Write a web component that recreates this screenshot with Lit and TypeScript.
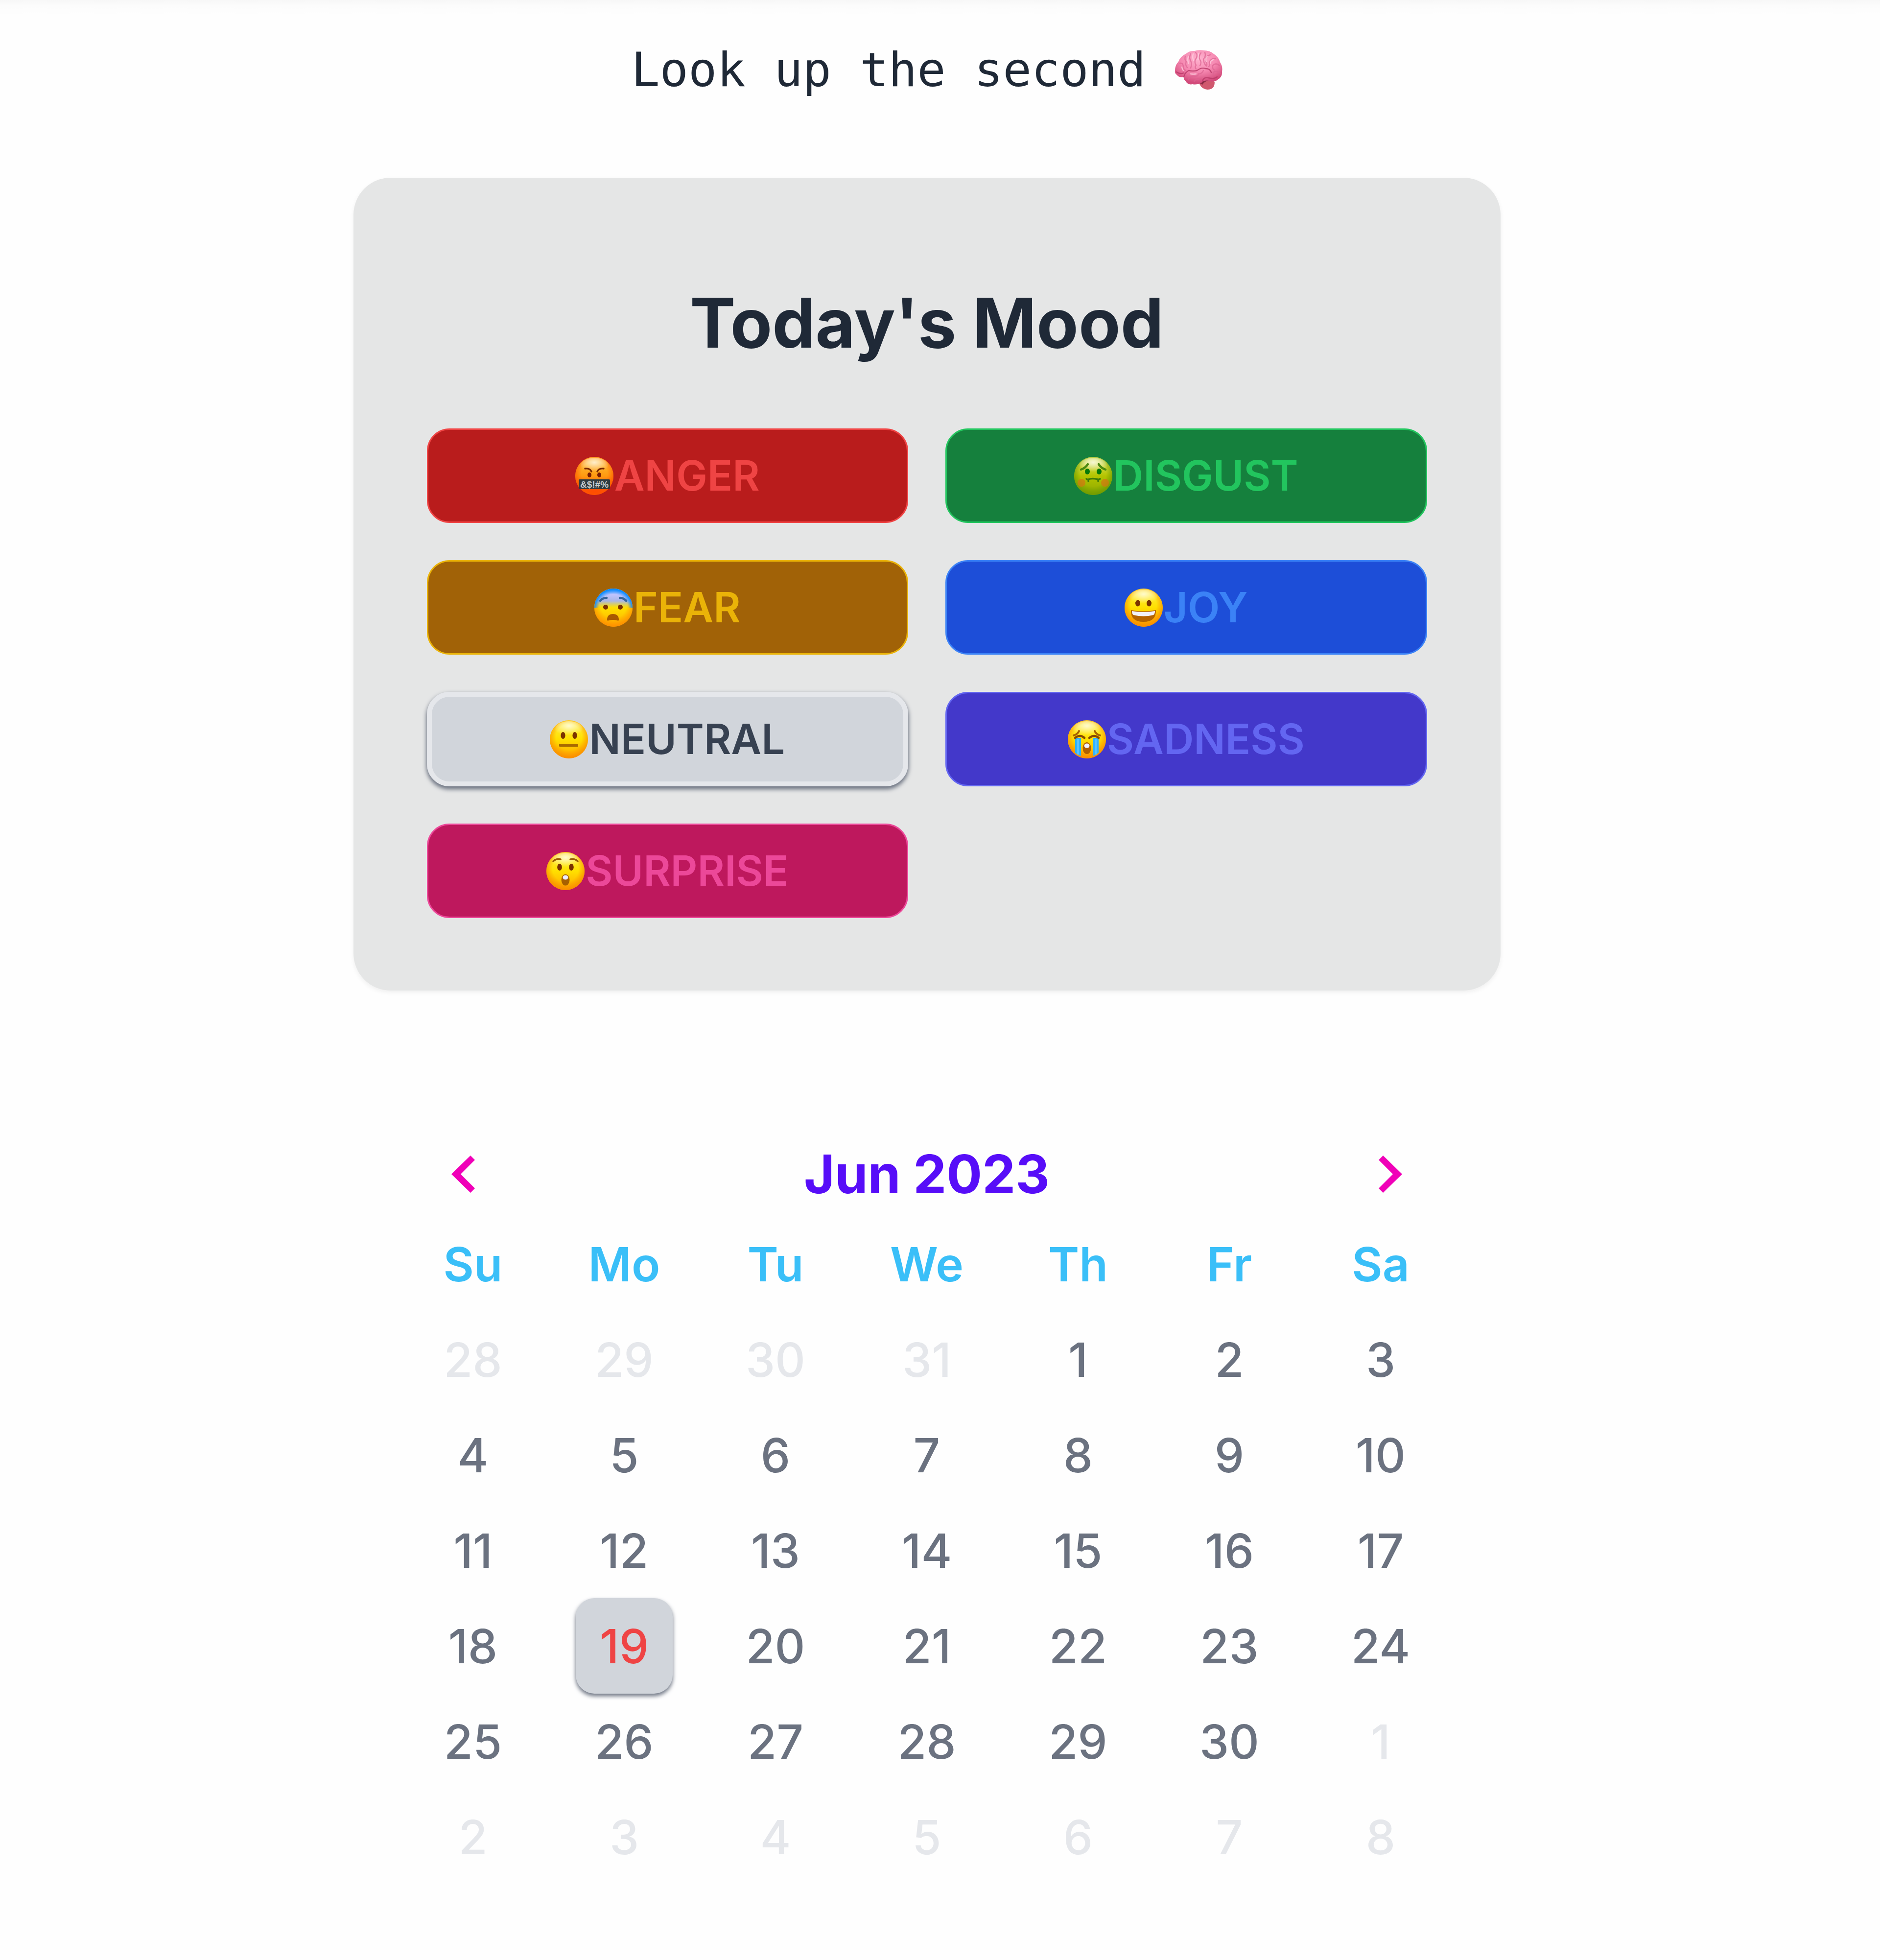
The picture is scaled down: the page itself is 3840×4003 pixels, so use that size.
import { LitElement, html, svg, css, type SVGTemplateResult } from "lit";
import { customElement, state } from "lit/decorators.js";
import { classMap } from "lit/directives/class-map.js";

interface Mood {
  id: string;
  label: string;
  top: string;
  middle: string;
  bottom: string;
  rim: string;
  features: SVGTemplateResult;
}

const eyes = (leftX: number, rightX: number, y: number, rx: number, ry: number, fill = "#7a3200") => svg`
  <ellipse cx=${leftX} cy=${y} rx=${rx} ry=${ry} fill=${fill} />
  <ellipse cx=${rightX} cy=${y} rx=${rx} ry=${ry} fill=${fill} />`;

const yellow = { top: "#fff04a", middle: "#ffe000", bottom: "#ffa600", rim: "#f98a00" };

const MOODS: Mood[] = [
  {
    id: "anger",
    label: "ANGER",
    top: "#ffc640",
    middle: "#ff9a10",
    bottom: "#ff2a00",
    rim: "#ff5a00",
    features: svg`
      <path d="M20 24q10-1 13 6M58 24q-10-1-13 6" fill="none" stroke="#7a2a00" stroke-width="3.4" stroke-linecap="round" />
      ${eyes(29, 49, 37, 4, 5, "#7a1c00")}
      <rect x="7" y="46" width="64" height="20" rx="2" fill="#2f3c40" />
      <text x="39" y="63" text-anchor="middle" font-family="Liberation Sans, sans-serif" font-size="19" font-weight="700" fill="#c5cdd0">&amp;$!#%</text>`,
  },
  {
    id: "disgust",
    label: "DISGUST",
    top: "#e3ea70",
    middle: "#b4c400",
    bottom: "#8aa800",
    rim: "#6d9a00",
    features: svg`
      <path d="M14 26q9-3 14-11M64 26q-9-3-14-11" fill="none" stroke="#4c8a10" stroke-width="4.4" stroke-linecap="round" />
      ${eyes(27, 51, 30, 5, 6, "#087a08")}
      <circle cx="15" cy="53" r="8" fill="#d07a10" opacity=".75" />
      <circle cx="63" cy="53" r="8" fill="#d07a10" opacity=".75" />
      <path d="M25 45q2 2 4 1q9-3 19 0q2 1 5-1M29 46v4M49 46v4" fill="none" stroke="#3f7a08" stroke-width="3.4" stroke-linecap="round" />`,
  },
  {
    id: "fear",
    label: "FEAR",
    top: "#8fb4ff",
    middle: "#ffdf00",
    bottom: "#ffae00",
    rim: "#ff8c00",
    features: svg`
      <path d="M0 39A39 39 0 0 1 78 39Z" fill="url(#fear-sky)" />
      <path d="M0 39A39 39 0 0 1 78 39Z" fill="url(#fear-rim)" />
      <path d="M12 25q5-6 13-6M65 25q-5-6-13-6" fill="none" stroke="#35669c" stroke-width="4.4" stroke-linecap="round" />
      ${eyes(23, 53, 38, 5, 5)}
      <path d="M26 64q0-12 12-12t12 12q0 2-2 1.500q-10-3-20 0q-2 .5-2-1.500z" fill="#a85a00" />`,
  },
  {
    id: "joy",
    label: "JOY",
    ...yellow,
    features: svg`
      ${eyes(27, 50, 30, 5, 6.5)}
      <path d="M13 44q26 5 51 0q1 24-25.500 24T13 44z" fill="#b56400" />
      <path d="M15 46q24 4 47 0q0 6-3 8q-20 5-41 0q-3-2-3-8z" fill="#f1f1fa" />`,
  },
  {
    id: "neutral",
    label: "NEUTRAL",
    ...yellow,
    features: svg`
      ${eyes(27, 51, 31, 4.6, 7)}
      <rect x="19" y="48" width="39" height="6" rx="1.500" fill="#a86a00" />`,
  },
  {
    id: "sadness",
    label: "SADNESS",
    ...yellow,
    features: svg`
      <path d="M15 36h12v37q-7-2-12-7zM51 36h12v30q-5 5-12 7z" fill="#2eb2ff" />
      <path d="M19 38h4v32h-4zM55 38h4v32h-4z" fill="#6bcaff" opacity=".7" />
      <path d="M12 31q8-2 11-9M66 31q-8-2-11-9" fill="none" stroke="#a86200" stroke-width="4" stroke-linecap="round" />
      <path d="M15 36q10-8 19 0M44 36q10-8 19 0" fill="none" stroke="#8a4a00" stroke-width="4.500" stroke-linecap="round" />
      <ellipse cx="39" cy="57" rx="8.500" ry="12" fill="#b06000" />
      <ellipse cx="39" cy="52" rx="5.500" ry="4.500" fill="#eef0ff" />`,
  },
  {
    id: "surprise",
    label: "SURPRISE",
    ...yellow,
    features: svg`
      <path d="M14 19q6-6 15-4M64 19q-6-6-15-4" fill="none" stroke="#9a5c00" stroke-width="3.6" stroke-linecap="round" />
      ${eyes(27, 51, 31, 4.8, 7)}
      <ellipse cx="39" cy="57" rx="8.500" ry="11.500" fill="#a86000" />
      <ellipse cx="39" cy="52" rx="5.500" ry="4.500" fill="#eceeff" />`,
  },
];

const WEEKDAYS = ["Su", "Mo", "Tu", "We", "Th", "Fr", "Sa"];
const MONTHS = ["Jan", "Feb", "Mar", "Apr", "May", "Jun", "Jul", "Aug", "Sep", "Oct", "Nov", "Dec"];

@customElement("mood-face")
class MoodFace extends LitElement {
  static properties = { mood: { attribute: false } };
  declare mood: Mood;

  static styles = css`
    :host {
      display: block;
      flex: none;
    }
    .face {
      display: block;
      width: 78px;
      height: 78px;
    }
  `;

  render() {
    const m = this.mood;
    return html`<svg class="face" viewBox="0 0 78 78" aria-hidden="true">
      <defs>
        <linearGradient id="skin" x1="0" y1="0" x2="0" y2="1">
          <stop offset="0" stop-color=${m.top} />
          <stop offset=".5" stop-color=${m.middle} />
          <stop offset="1" stop-color=${m.bottom} />
        </linearGradient>
        <radialGradient id="rim" cx=".5" cy=".44" r=".56">
          <stop offset=".6" stop-color=${m.rim} stop-opacity="0" />
          <stop offset="1" stop-color=${m.rim} stop-opacity=".9" />
        </radialGradient>
        <radialGradient id="shine" cx=".5" cy=".3" r=".6">
          <stop offset="0" stop-color="#fff" stop-opacity=".75" />
          <stop offset="1" stop-color="#fff" stop-opacity="0" />
        </radialGradient>
        <linearGradient id="fear-sky" x1="0" y1="0" x2="0" y2="1">
          <stop offset="0" stop-color="#6aa4ff" />
          <stop offset=".3" stop-color="#c0c4ff" />
          <stop offset=".65" stop-color="#a9b6e6" />
          <stop offset="1" stop-color="#e0d060" stop-opacity="0" />
        </linearGradient>
        <radialGradient id="fear-rim" gradientUnits="userSpaceOnUse" cx="39" cy="42" r="42">
          <stop offset=".72" stop-color="#1590ff" stop-opacity="0" />
          <stop offset=".95" stop-color="#0c8cff" />
        </radialGradient>
      </defs>
      <circle cx="39" cy="39" r="39" fill="url(#skin)" />
      <circle cx="39" cy="39" r="39" fill="url(#rim)" />
      <ellipse cx="39" cy="18" rx="28" ry="16" fill="url(#shine)" />
      ${m.features}
    </svg>`;
  }
}

@customElement("brain-icon")
class BrainIcon extends LitElement {
  static styles = css`
    :host {
      display: block;
      flex: none;
    }
    .brain {
      display: block;
      width: 98px;
      height: 82px;
    }
  `;

  render() {
    return html`<svg class="brain" viewBox="0 0 98 82" role="img" aria-label="brain">
      <defs>
        <radialGradient id="pink" cx=".5" cy=".25" r=".7">
          <stop offset="0" stop-color="#ffb3cf" />
          <stop offset=".55" stop-color="#f587b0" />
          <stop offset="1" stop-color="#d24a7a" />
        </radialGradient>
      </defs>
      <path d="M50 67q3 9 10 12q8 4 16 0q6-3 6-14L66 58z" fill="#d0586e" />
      <path d="M50 67q6-7 16-7l10 2q-14 0-19 9z" fill="#8a2a44" />
      <path d="M1 42Q1 31 8 24Q12 13 23 8Q31 1 41 2Q50-1 60 1Q72 1 80 8Q90 14 93 25Q99 34 97 44Q98 55 89 60Q83 66 73 64Q62 60 55 67Q45 72 37 70Q27 72 23 64Q18 60 19 55Q9 57 5 51Q0 48 1 42Z" fill="url(#pink)" />
      <g fill="none" stroke-linecap="round" stroke-width="2.400">
        <path stroke="#b93a68" opacity=".8" d="M19 55q2-9 10-13q9 2 17 0q9-7 17-4q10 0 12 8M4 45q7 5 15 2M57 64q2-9 12-7q12 3 18-2" />
        <path stroke="#dc6492" opacity=".7" d="M11 27q6-1 7 6q-1 6 5 9M22 13q-2 7 2 11q-3 6 2 12M33 8q-4 8 0 14q3 7 0 15M43 5q6 6 0 14q-3 6 1 12q-3 4 0 8M54 6q-6 8-2 14q4 6 0 12M62 5q3 8-3 14q1 9 6 14M73 10q-10 2-10 12q4 6 3 9M84 18q-9-2-13 7q2 6-1 9M92 32q-8-7-14 0q-1 8 4 9M93 48q-7-8-14-2q1 7-5 9M28 61q5-9 13-7q7 0 8-5q7 0 10-7M40 65q3-6 10-5" />
        <path stroke="#ffd3e3" opacity=".7" d="M28 14q-2 7 1 14M38 8q-2 8 1 14M49 8q-1 8-1 12M67 13q-5 5-2 11M79 20q-6 2-6 7M33 49q6 1 11 0M15 35q1 5 3 7" />
      </g>
    </svg>`;
  }
}

@customElement("app-root")
class AppRoot extends LitElement {
  @state() private mood = "neutral";
  @state() private year = 2023;
  @state() private month = 5;
  @state() private selected = "2023-5-19";

  static styles = css`
    :host {
      display: block;
      font-family: Inter, "Liberation Sans", sans-serif;
      color: #1f2937;
    }
    * {
      box-sizing: border-box;
    }
    button {
      font: inherit;
      cursor: pointer;
    }
    .page {
      display: flex;
      flex-direction: column;
      align-items: center;
      min-height: 100vh;
      padding: 75px 54px 152px 0;
      background: linear-gradient(#f7f7f7, #fcfcfc 12px, #fefefe 32px);
    }
    .title {
      display: flex;
      align-items: center;
      margin: 0;
      font-family: "DejaVu Sans Mono", monospace;
      font-size: 97px;
      font-weight: 400;
      line-height: 136px;
      white-space: pre;
    }
    .card {
      width: 100%;
      max-width: 2343px;
      margin-top: 152px;
      padding: 216px 150px 148px;
      border-radius: 76px;
      background: #e5e6e6;
      box-shadow: 0 4px 10px rgba(0, 0, 0, 0.06);
    }
    .heading {
      margin: 0 0 136px;
      font-size: 140px;
      font-weight: 700;
      line-height: 160px;
      text-align: center;
    }
    .moods {
      display: grid;
      grid-template-columns: 1fr 1fr;
      gap: 76px;
    }
    .mood {
      display: flex;
      align-items: center;
      justify-content: center;
      gap: 2px;
      height: 193px;
      padding: 0 32px;
      border: 3px solid;
      border-radius: 46px;
      font-size: 85px;
      font-weight: 600;
      line-height: 1;
    }
    .anger {
      background: #b91c1c;
      color: #ef4444;
    }
    .disgust {
      background: #15803d;
      color: #22c55e;
    }
    .fear {
      background: #a16207;
      color: #eab308;
    }
    .joy {
      background: #1d4ed8;
      color: #3b82f6;
    }
    .neutral {
      background: #d1d5db;
      color: #374151;
    }
    .sadness {
      background: #4338ca;
      color: #6366f1;
    }
    .surprise {
      background: #be185d;
      color: #ec4899;
    }
    .chosen {
      border: 10px solid #e5e7eb;
      box-shadow: 0 5px 8px 1px #6b7280;
    }
    .calendar {
      width: 100%;
      max-width: 2163px;
      margin-top: 289px;
    }
    .bar {
      display: flex;
      align-items: center;
      justify-content: space-between;
      height: 172px;
      padding: 0 32px;
    }
    .month {
      margin: 0;
      font-size: 108px;
      font-weight: 700;
      line-height: 1;
      color: #570df8;
    }
    .step {
      display: flex;
      align-items: center;
      justify-content: center;
      width: 200px;
      height: 160px;
      padding: 0;
      border: 0;
      background: none;
      color: #f000b8;
    }
    .prev {
      justify-content: flex-start;
      padding-left: 78px;
    }
    .next {
      justify-content: flex-end;
      padding-right: 78px;
    }
    .chevron {
      width: 48px;
      height: 76px;
    }
    .days {
      width: 100%;
      border-collapse: collapse;
      table-layout: fixed;
      font-size: 96px;
      line-height: 1;
    }
    .weekday,
    .cell {
      height: 195px;
      padding: 0;
      text-align: center;
      vertical-align: middle;
    }
    .weekday {
      font-weight: 600;
      color: #3abff8;
    }
    .day {
      display: block;
      width: 198px;
      height: 195px;
      margin: 0 auto;
      padding: 0;
      border: 0;
      border-radius: 38px;
      background: none;
      font-weight: 500;
      color: #6b7280;
    }
    .outside {
      color: #e5e7eb;
    }
    .current {
      background: #d1d5db;
      color: #ef4444;
      box-shadow: 0 5px 8px #6b7280;
    }
  `;

  private step(delta: number) {
    const d = new Date(this.year, this.month + delta, 1);
    this.year = d.getFullYear();
    this.month = d.getMonth();
  }

  private weeks(): Date[][] {
    const lead = new Date(this.year, this.month, 1).getDay();
    return Array.from({ length: 6 }, (_, w) =>
      Array.from({ length: 7 }, (_, d) => new Date(this.year, this.month, 1 - lead + w * 7 + d)),
    );
  }

  private renderDay(date: Date) {
    const key = `${date.getFullYear()}-${date.getMonth()}-${date.getDate()}`;
    const classes = classMap({
      day: true,
      outside: date.getMonth() !== this.month,
      current: key === this.selected,
    });
    return html`<td class="cell">
      <button class=${classes} @click=${() => (this.selected = key)}>${date.getDate()}</button>
    </td>`;
  }

  render() {
    return html`
      <main class="page">
        <h1 class="title"><span>Look up the second </span><brain-icon></brain-icon></h1>

        <section class="card">
          <h2 class="heading">Today's Mood</h2>
          <div class="moods">
            ${MOODS.map(
              (m) => html`<button
                class=${classMap({ mood: true, [m.id]: true, chosen: this.mood === m.id })}
                @click=${() => (this.mood = m.id)}
              >
                <mood-face .mood=${m}></mood-face><span>${m.label}</span>
              </button>`,
            )}
          </div>
        </section>

        <section class="calendar">
          <header class="bar">
            <button class="step prev" aria-label="Previous month" @click=${() => this.step(-1)}>
              <svg class="chevron" viewBox="0 0 48 76" aria-hidden="true">
                <path d="M39 0L48 9L19 38L48 67L39 76L0 38Z" fill="currentColor" />
              </svg>
            </button>
            <h2 class="month">${MONTHS[this.month]} ${this.year}</h2>
            <button class="step next" aria-label="Next month" @click=${() => this.step(1)}>
              <svg class="chevron" viewBox="0 0 48 76" aria-hidden="true">
                <path d="M9 0L0 9L29 38L0 67L9 76L48 38Z" fill="currentColor" />
              </svg>
            </button>
          </header>
          <table class="days">
            <thead>
              <tr>
                ${WEEKDAYS.map((d) => html`<th class="weekday" scope="col">${d}</th>`)}
              </tr>
            </thead>
            <tbody>
              ${this.weeks().map((week) => html`<tr>${week.map((d) => this.renderDay(d))}</tr>`)}
            </tbody>
          </table>
        </section>
      </main>
    `;
  }
}
